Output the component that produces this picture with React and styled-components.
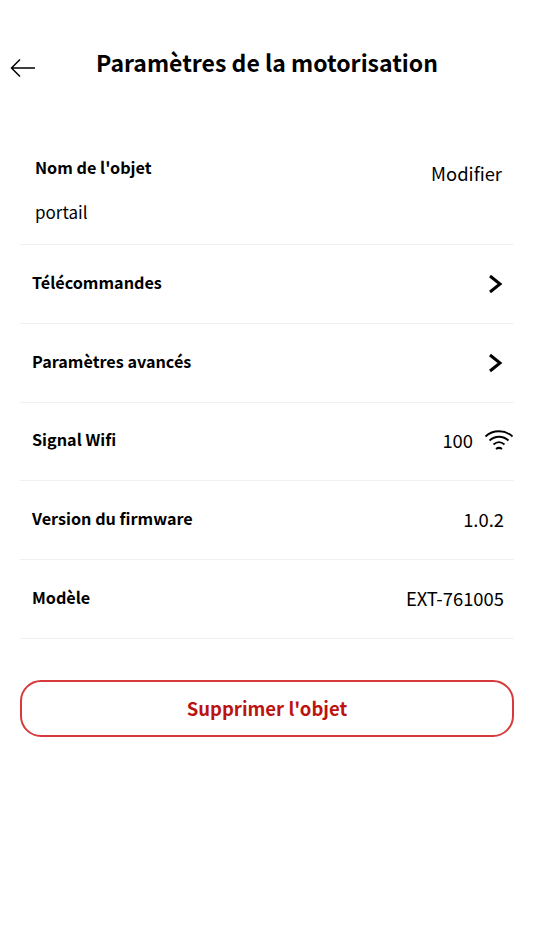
import React from 'react';
import styled, { createGlobalStyle } from 'styled-components';

const GlobalStyle = createGlobalStyle`
  html, body {
    margin: 0;
    padding: 0;
    background: #ffffff;
  }
  body {
    font-family: "Noto Sans CJK SC", "Noto Sans", sans-serif;
    color: #000000;
  }
`;

const Page = styled.div`
  width: 534px;
  height: 950px;
  box-sizing: border-box;
  padding: 42px 20px 0;
  overflow: hidden;
`;

const Header = styled.header`
  position: relative;
  height: 40px;
  display: flex;
  align-items: center;
  justify-content: center;
  margin-bottom: 74px;
`;

const BackIcon = styled.svg`
  position: absolute;
  left: -10px;
  top: 13px;
  width: 26px;
  height: 26px;
`;

const Title = styled.h1`
  margin: 0;
  font-size: 23px;
  line-height: 40px;
  font-weight: 700;
`;

const NameRow = styled.div`
  height: 89px;
  box-sizing: border-box;
  display: flex;
  justify-content: space-between;
  border-bottom: 1px solid #f0f0f0;
  padding: 0 12px 0 15px;
`;

const NameColumn = styled.div`
  display: flex;
  flex-direction: column;
  gap: 19px;
`;

const Row = styled.div`
  height: 78.8px;
  box-sizing: border-box;
  display: flex;
  align-items: center;
  justify-content: space-between;
  border-bottom: 1px solid #f0f0f0;
  padding: 0 ${props => props.$right}px 2px 12px;
`;

const Label = styled.span`
  font-size: 16.2px;
  line-height: 25px;
  font-weight: 700;
  margin-top: -1px;
`;

const Value = styled.span`
  font-size: 18.4px;
  line-height: 28px;
  font-weight: 400;
  margin-top: ${props => props.$shift || 0}px;
`;

const NameValue = styled(Value)`
  font-size: 17px;
  line-height: 25px;
`;

const EditLink = styled(Value)`
  padding-top: 3px;
`;

const SignalGroup = styled.div`
  display: flex;
  align-items: center;
  gap: 11px;
`;

const Chevron = styled.svg`
  width: 24px;
  height: 24px;
  margin-top: 2px;
`;

const WifiIcon = styled.svg`
  width: 30px;
  height: 24px;
`;

const DeleteButton = styled.button`
  display: block;
  width: 100%;
  height: 57px;
  margin-top: 41px;
  background: #ffffff;
  border: 2px solid #d63a3a;
  border-radius: 21px;
  color: #bb1410;
  font-family: inherit;
  font-size: 18.5px;
  font-weight: 700;
`;

function App() {
  return (
    <Page>
      <GlobalStyle />
      <Header>
        <BackIcon viewBox="0 0 26 26" fill="none" stroke="#000" strokeWidth="1.5">
          <path d="M1.5 13H25M10 4.5L1.5 13L10 21.5" />
        </BackIcon>
        <Title>Paramètres de la motorisation</Title>
      </Header>

      <NameRow>
        <NameColumn>
          <Label>Nom de l'objet</Label>
          <NameValue>portail</NameValue>
        </NameColumn>
        <EditLink>Modifier</EditLink>
      </NameRow>

      <Row $right={7}>
        <Label>Télécommandes</Label>
        <Chevron viewBox="0 0 24 24" fill="none" stroke="#000" strokeWidth="3">
          <path d="M7 4L17 12L7 20" />
        </Chevron>
      </Row>
      <Row $right={7}>
        <Label>Paramètres avancés</Label>
        <Chevron viewBox="0 0 24 24" fill="none" stroke="#000" strokeWidth="3">
          <path d="M7 4L17 12L7 20" />
        </Chevron>
      </Row>
      <Row $right={0}>
        <Label>Signal Wifi</Label>
        <SignalGroup>
          <Value>100</Value>
          <WifiIcon viewBox="0 0 30 24" fill="none" stroke="#000" strokeWidth="1.8">
            <path d="M1.5 8.5C9 1.5 21 1.5 28.5 8.5" />
            <path d="M5.5 12.5C11 7.5 19 7.5 24.5 12.5" />
            <path d="M9.5 16.5C13 13.5 17 13.5 20.5 16.5" />
            <path d="M12 21C14 19.5 16 19.5 18 21" strokeWidth="2" />
          </WifiIcon>
        </SignalGroup>
      </Row>
      <Row $right={10}>
        <Label>Version du firmware</Label>
        <Value>1.0.2</Value>
      </Row>
      <Row $right={10}>
        <Label>Modèle</Label>
        <Value>EXT-761005</Value>
      </Row>

      <DeleteButton>Supprimer l'objet</DeleteButton>
    </Page>
  );
}

export default App;
